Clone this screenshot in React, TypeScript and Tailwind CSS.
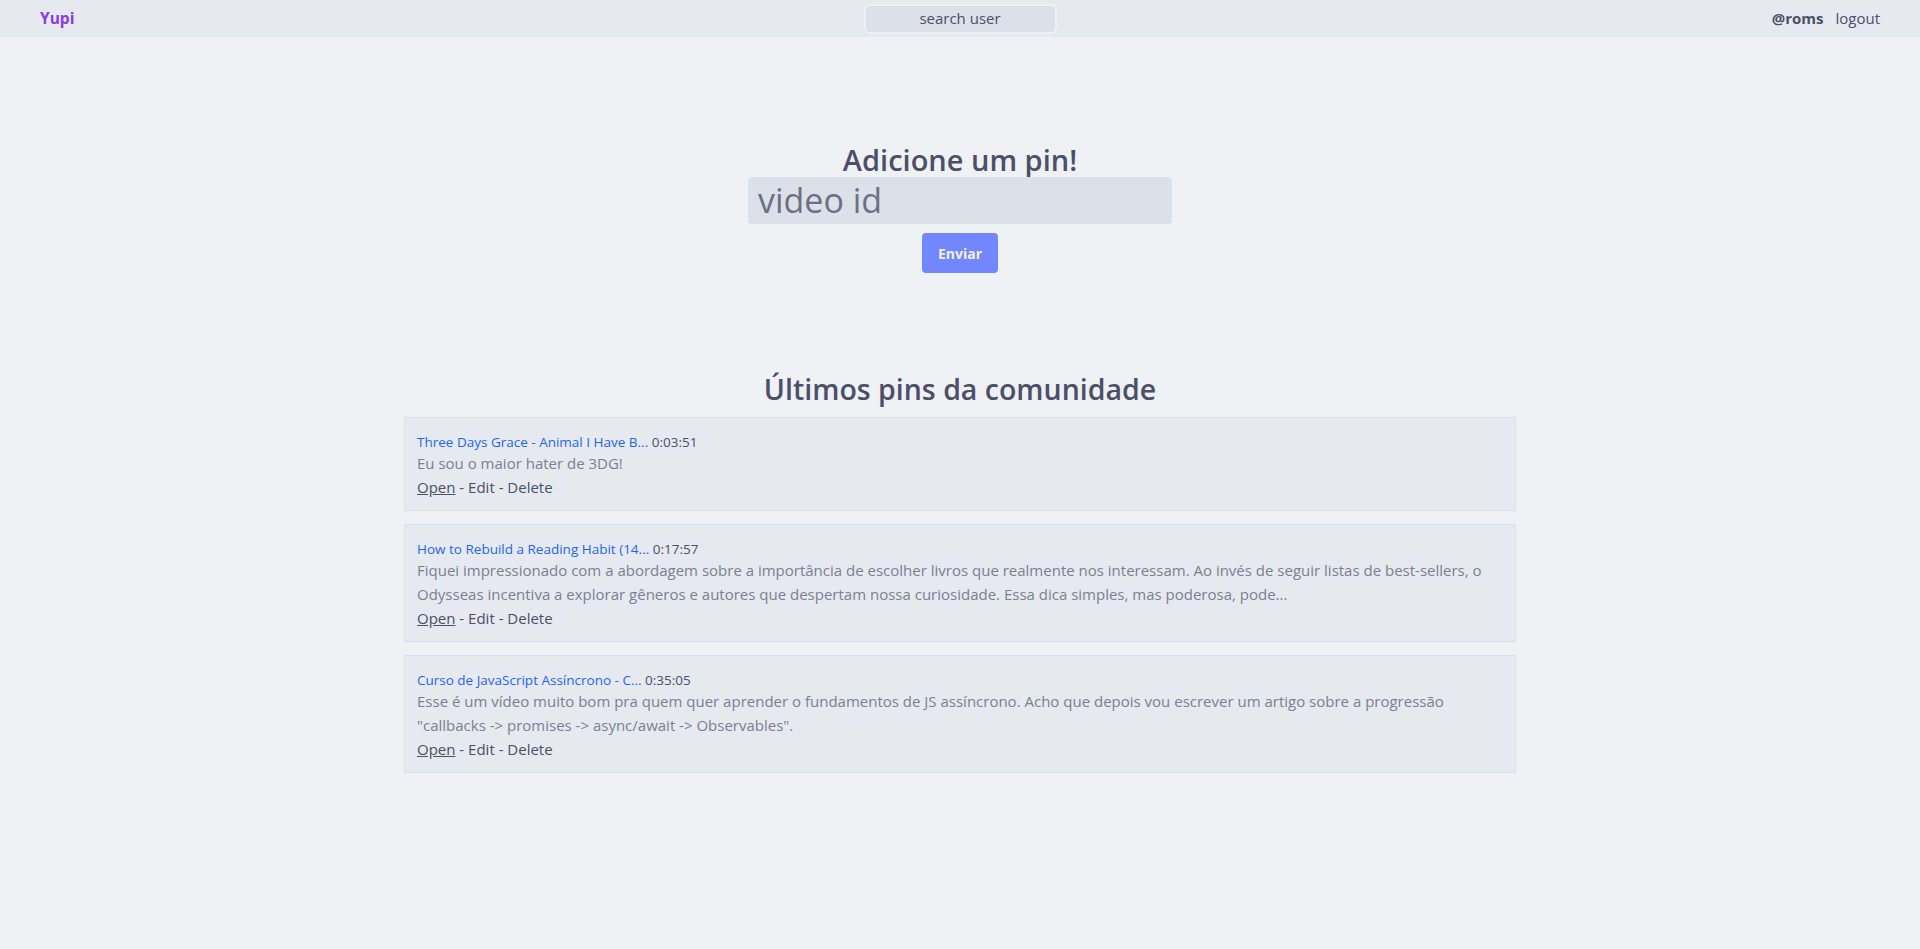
import React from "react";

const pins = [
  {
    title: "Three Days Grace - Animal I Have B...",
    time: "0:03:51",
    text: "Eu sou o maior hater de 3DG!",
  },
  {
    title: "How to Rebuild a Reading Habit (14...",
    time: "0:17:57",
    text: "Fiquei impressionado com a abordagem sobre a importância de escolher livros que realmente nos interessam. Ao invés de seguir listas de best-sellers, o Odysseas incentiva a explorar gêneros e autores que despertam nossa curiosidade. Essa dica simples, mas poderosa, pode...",
  },
  {
    title: "Curso de JavaScript Assíncrono - C...",
    time: "0:35:05",
    text: 'Esse é um vídeo muito bom pra quem quer aprender o fundamentos de JS assíncrono. Acho que depois vou escrever um artigo sobre a progressão "callbacks -> promises -> async/await -> Observables".',
  },
];

export default function App() {
  return (
    <div
      className="min-h-[949px] bg-[#eff1f5] text-[#4c4f69]"
      style={{ fontFamily: '"Open Sans", "Noto Sans", sans-serif' }}
    >
      <header className="h-[37px] bg-[#e6e9ef] flex items-center justify-between px-10">
        <span className="text-[15.5px] font-bold text-[#8839ef] w-[200px]">Yupi</span>
        <div className="w-[193px] h-[30px] rounded-md border-2 border-[#eef0f4] bg-[#dce0e8] flex items-center justify-center text-[15px] text-[#4c4f69]">
          search user
        </div>
        <div className="w-[200px] flex justify-end items-center gap-3 text-[15px]">
          <span className="font-bold">@roms</span>
          <span>logout</span>
        </div>
      </header>

      <section className="flex flex-col items-center pt-[106px]">
        <h1 className="text-[29px] leading-[34px] font-semibold">Adicione um pin!</h1>
        <div className="w-[424px] h-[47px] rounded bg-[#dce0e8] flex items-center px-[10px] text-[34px] text-[#6c6f85]">
          video id
        </div>
        <button className="mt-[9px] w-[76px] h-[40px] rounded bg-[#7287fd] text-[#eff1f5] text-[14px] font-bold">
          Enviar
        </button>
      </section>

      <section className="flex flex-col items-center mt-[96px]">
        <h2 className="text-[28.5px] leading-[40px] font-semibold">Últimos pins da comunidade</h2>
        <div className="w-[1112px] mt-[8px] flex flex-col gap-[13px]">
          {pins.map((p) => (
            <div
              key={p.time}
              className="border border-[#dce0e8] bg-[#e6e9ef] pl-[12px] pr-[12px] pt-[15px] pb-[11px]"
            >
              <div className="text-[13.5px] leading-[18px]">
                <span className="text-[#1e66f5]">{p.title}</span>{" "}
                <span>{p.time}</span>
              </div>
              <p className="text-[15px] leading-[24px] text-[#7c7f93]">{p.text}</p>
              <div className="text-[15px] leading-[24px]">
                <span className="underline">Open</span> - Edit - Delete
              </div>
            </div>
          ))}
        </div>
      </section>
    </div>
  );
}
